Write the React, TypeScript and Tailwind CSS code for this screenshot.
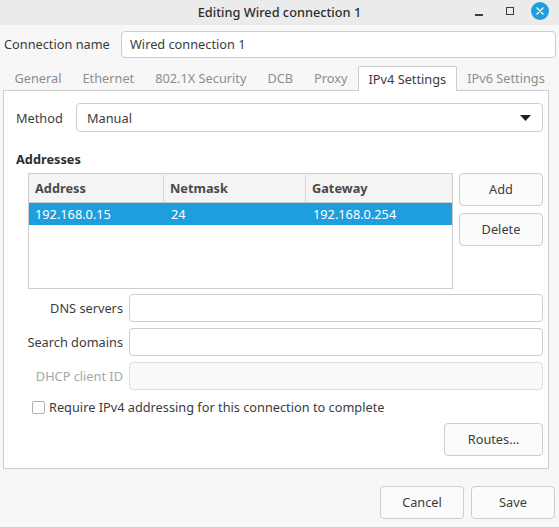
import React from "react";

const font = { fontFamily: '"Noto Sans", "Open Sans", sans-serif' };

const tabs = ["General", "Ethernet", "802.1X Security", "DCB", "Proxy", "IPv4 Settings", "IPv6 Settings"];

function Btn({ label, className = "" }: { label: string; className?: string }) {
  return (
    <button
      className={`flex items-center justify-center rounded-[4px] border border-[#cdcdcd] bg-[#fbfbfb] pt-px text-[12.75px] text-[#3c3c3c] ${className}`}
    >
      {label}
    </button>
  );
}

function Field({ label, disabled = false }: { label: string; disabled?: boolean }) {
  return (
    <div className="flex h-[28px] items-center gap-[6px]">
      <span className={`w-[107px] pt-[2px] text-right text-[12.75px] ${disabled ? "text-[#a6a6a6]" : "text-[#3c3c3c]"}`}>{label}</span>
      <div
        className={`h-full flex-1 rounded-[4px] border ${disabled ? "border-[#dedede] bg-[#fafafa]" : "border-[#cdcdcd] bg-white"}`}
      />
    </div>
  );
}

export default function App() {
  return (
    <div className="flex h-[528px] w-[559px] flex-col overflow-hidden bg-[#f7f7f7] text-[#3c3c3c]" style={font}>
      {/* title bar */}
      <div className="relative flex h-[25px] shrink-0 items-center justify-center bg-[#ebebeb]">
        <span className="text-[12.75px] font-medium text-[#2e2e2e]">Editing Wired connection 1</span>
        <div className="absolute right-[4px] top-0 flex h-full items-center">
          <div className="flex h-full w-[31px] items-center justify-center">
            <div className="mt-[5px] h-[1.5px] w-[8px] bg-[#3c3c3c]" />
          </div>
          <div className="flex h-full w-[31px] items-center justify-center">
            <div className="mt-[-3px] h-[8px] w-[8px] border border-[#3c3c3c]" />
          </div>
          <div className="flex h-full w-[30px] items-center justify-center">
            <div className="mt-[-4px] flex h-[18px] w-[18px] items-center justify-center rounded-full bg-[#1f9ede]">
              <svg width="8" height="8" viewBox="0 0 8 8">
                <path d="M1 1 L7 7 M7 1 L1 7" stroke="white" strokeWidth="1.4" strokeLinecap="round" />
              </svg>
            </div>
          </div>
        </div>
      </div>

      {/* connection name */}
      <div className="mt-[6px] flex h-[27px] items-center pl-[4px] pr-[3px]">
        <span className="w-[117px] pt-px text-[12.75px]">Connection name</span>
        <div className="flex h-full flex-1 items-center rounded-[4px] border border-[#cdcdcd] bg-white pl-[8px] pt-px text-[12.75px]">
          Wired connection 1
        </div>
      </div>

      {/* tabs */}
      <div className="mt-[8px] flex h-[24px] shrink-0 pl-[4px] whitespace-nowrap">
        {tabs.map((t) => {
          const active = t === "IPv4 Settings";
          return (
            <div
              key={t}
              className={`relative z-10 flex h-[24px] items-center px-[9.5px] pt-px text-[12.75px] ${
                active
                  ? "h-[25px] rounded-t-[2px] border border-b-0 border-[#cdcdcd] bg-white text-[#3c3c3c]"
                  : "border border-transparent text-[#8e8e8e]"
              }`}
            >
              {t}
            </div>
          );
        })}
      </div>

      {/* panel */}
      <div className="ml-[3px] w-[546px] border border-[#cdcdcd] bg-white pb-[12px] pl-[12px] pr-[5px] pt-[12px]">
        <div className="flex h-[29px] items-center">
          <span className="w-[60px] pt-[2px] text-[12.75px]">Method</span>
          <div className="flex h-full flex-1 items-center justify-between rounded-[4px] border border-[#cdcdcd] bg-white pl-[10px] pr-[11px] text-[12.75px]">
            <span className="pt-[2px]">Manual</span>
            <svg width="11" height="6" viewBox="0 0 11 6">
              <path d="M0 0 H11 L5.5 6 Z" fill="#222" />
            </svg>
          </div>
        </div>

        <div className="mt-[18px] flex h-[18px] items-center pt-[2px] text-[12.75px] font-bold text-[#2e2e2e]">Addresses</div>

        <div className="mt-[5px] flex gap-[6px] pl-[12px]">
          <div className="h-[116px] w-[425px] border border-[#cdcdcd] bg-white">
            <div className="flex h-[29px] border-b border-[#cdcdcd] bg-[#f4f4f4] pt-px text-[12.75px] font-bold text-[#4a4a4a]">
              <div className="flex w-[135px] items-center border-r border-[#d6d6d6] pl-[6px]">Address</div>
              <div className="flex w-[142px] items-center border-r border-[#d6d6d6] pl-[6px]">Netmask</div>
              <div className="flex flex-1 items-center pl-[6px]">Gateway</div>
            </div>
            <div className="flex h-[22px] bg-[#1f9ede] pt-px text-[12.75px] text-white">
              <div className="flex w-[135px] items-center pl-[6px]">192.168.0.15</div>
              <div className="flex w-[142px] items-center pl-[7px]">24</div>
              <div className="flex flex-1 items-center pl-[7px]">192.168.0.254</div>
            </div>
          </div>
          <div className="flex flex-col gap-[7px]">
            <Btn label="Add" className="h-[33px] w-[84px]" />
            <Btn label="Delete" className="h-[33px] w-[84px]" />
          </div>
        </div>

        <div className="mt-[5px] flex flex-col gap-[6px]">
          <Field label="DNS servers" />
          <Field label="Search domains" />
          <Field label="DHCP client ID" disabled />
        </div>

        <div className="mt-[7px] flex h-[20px] items-center gap-[4px] pl-[16px] text-[12.75px]">
          <div className="h-[13px] w-[13px] rounded-[2px] border border-[#b0b0b0] bg-white" />
          <span className="pt-px">Require IPv4 addressing for this connection to complete</span>
        </div>

        <div className="mt-[6px] flex justify-end">
          <Btn label="Routes…" className="h-[33px] w-[99px]" />
        </div>
      </div>

      {/* footer */}
      <div className="mt-[17px] flex justify-end gap-[7px] pr-[4px]">
        <Btn label="Cancel" className="h-[33px] w-[84px]" />
        <Btn label="Save" className="h-[33px] w-[84px]" />
      </div>
      <div className="mt-auto h-px w-full bg-[#cdcdcd]" />
    </div>
  );
}
